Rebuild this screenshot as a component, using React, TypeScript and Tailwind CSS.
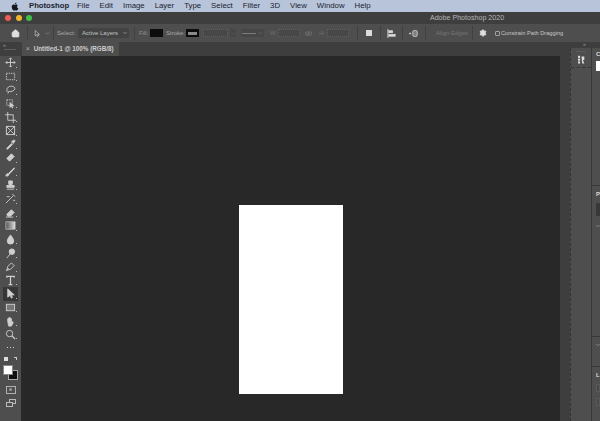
import type { ReactNode } from "react";
import { ChevronDown, Home, Settings } from "lucide-react";

const menus = ["File", "Edit", "Image", "Layer", "Type", "Select", "Filter", "3D", "View", "Window", "Help"];

function Tool({ children, dark }: { children: ReactNode; dark?: boolean }) {
  return (
    <div className={`relative ml-[3px] flex h-[13.6px] w-[15px] items-center justify-center ${dark ? "bg-[#363636]" : ""}`}>
      <svg viewBox="0 0 12 12" className="h-[11px] w-[11px] text-[#cfcfcf]" fill="none" stroke="currentColor" strokeWidth="1">
        {children}
      </svg>
      <span className="absolute bottom-[2px] right-[1px] h-[1px] w-[1px] bg-[#bcbcbc]" />
    </div>
  );
}

function Sep({ className }: { className: string }) {
  return <div className={`h-[14px] w-px shrink-0 bg-[#414141] ${className}`} />;
}

function Label({ className, children }: { className: string; children: ReactNode }) {
  return <span className={`shrink-0 whitespace-nowrap ${className}`}>{children}</span>;
}

export default function App() {
  return (
    <div className="flex h-[421px] w-[600px] flex-col overflow-hidden bg-[#282828] font-['Liberation_Sans',sans-serif]">
      {/* mac menu bar */}
      <div className="flex h-[12px] items-center bg-[#b7c4d9] text-[7.800px] text-[#1c2230]">
        <svg viewBox="0 0 14 16" className="ml-[11px] h-[9px] w-[8px]" fill="#15181f">
          <path d="M10.6 8.5c0-1.8 1.5-2.6 1.5-2.7-.8-1.200-2.100-1.400-2.500-1.400-1-.1-2 .6-2.600.6-.5 0-1.400-.6-2.300-.6C3.500 4.400 2.400 5.100 1.800 6.200.5 8.400 1.500 11.700 2.700 13.500c.6.900 1.300 1.900 2.300 1.800.9 0 1.300-.6 2.400-.6s1.400.6 2.400.6 1.600-.9 2.200-1.800c.7-1 1-2 1-2-.1 0-2.400-.9-2.400-3zM8.800 3.100c.5-.6.900-1.500.8-2.300-.8 0-1.700.5-2.200 1.200-.5.500-.9 1.400-.8 2.200.8 0 1.700-.5 2.200-1.100z" />
        </svg>
        <span className="ml-[10px] w-[39px] whitespace-nowrap text-[7.700px] font-bold">Photoshop</span>
        <div className="ml-[9px] flex gap-[10px]">
          {menus.map((m) => (
            <span key={m}>{m}</span>
          ))}
        </div>
      </div>

      {/* title bar */}
      <div className="relative flex h-[12px] items-center justify-center bg-[#3e3e3e]">
        <div className="absolute left-[5px] flex gap-[4.500px]">
          <span className="h-[6px] w-[6px] rounded-full bg-[#ee5c54]" />
          <span className="h-[6px] w-[6px] rounded-full bg-[#f0b62e]" />
          <span className="h-[6px] w-[6px] rounded-full bg-[#3fc14a]" />
        </div>
        <span className="ml-[334px] text-[7.100px] text-[#b5b5b5]">Adobe Photoshop 2020</span>
      </div>

      {/* options bar */}
      <div className="flex h-[18px] items-center bg-[#4e4e4e] text-[6px] text-[#a8a8a8]">
        <Home className="ml-[11px] h-[9px] w-[9px] shrink-0 text-[#e0e0e0]" fill="currentColor" />
        <Sep className="ml-[7px]" />
        <svg viewBox="0 0 10 12" className="ml-[6px] h-[9px] w-[6px] shrink-0" fill="#444" stroke="#ddd" strokeWidth="1">
          <path d="M2 1v9l2.500-2 1.500 3 1.500-.7L6 7.500h3z" />
        </svg>
        <ChevronDown className="ml-[5px] h-[5px] w-[5px] shrink-0 text-[#bbb]" />
        <Sep className="ml-[3px]" />
        <Label className="ml-[3px] w-[18px]">Select:</Label>
        <div className="ml-[3px] flex h-[10px] w-[51px] shrink-0 items-center justify-between rounded-[1px] bg-[#434343] pl-[4px] pr-[1px] text-[#c4c4c4]">
          <span className="whitespace-nowrap">Active Layers</span>
          <ChevronDown className="h-[6px] w-[6px]" />
        </div>
        <Sep className="ml-[5px]" />
        <Label className="ml-[4px] w-[9px] text-[#949494]">Fill:</Label>
        <div className="ml-[2px] h-[8px] w-[13px] shrink-0 bg-[#0c0c0c]" />
        <Label className="ml-[3px] w-[18px]">Stroke:</Label>
        <div className="ml-[2px] flex h-[8px] w-[13px] shrink-0 items-center justify-center bg-[#0c0c0c]">
          <div className="h-[3px] w-[9px] bg-[#8a8a8a]" />
        </div>
        <div className="ml-[4px] h-[8px] w-[25px] shrink-0 border border-dotted border-[#606060] bg-[#474747]" />
        <div className="ml-[2px] flex h-[8px] w-[6px] shrink-0 items-center justify-center bg-[#474747]">
          <ChevronDown className="h-[5px] w-[5px] text-[#707070]" />
        </div>
        <div className="ml-[5px] flex h-[8px] w-[23px] shrink-0 items-center justify-between bg-[#474747] px-[1px]">
          <div className="h-px w-[14px] bg-[#7c7c7c]" />
          <ChevronDown className="h-[5px] w-[5px] text-[#8a8a8a]" />
        </div>
        <Label className="ml-[6px] w-[5px] text-[#6e6e6e]">W:</Label>
        <div className="ml-[3px] h-[8px] w-[22px] shrink-0 border border-dotted border-[#606060] bg-[#474747]" />
        <svg viewBox="0 0 8 5" className="ml-[5px] h-[5px] w-[7px] shrink-0" fill="none" stroke="#777" strokeWidth="1">
          <rect x="0.500" y="0.500" width="4" height="4" rx="2" />
          <rect x="3.500" y="0.500" width="4" height="4" rx="2" />
        </svg>
        <Label className="ml-[7px] w-[4px] text-[#6e6e6e]">H:</Label>
        <div className="ml-[4px] h-[8px] w-[22px] shrink-0 border border-dotted border-[#606060] bg-[#474747]" />
        <Sep className="ml-[8px]" />
        <div className="ml-[8px] h-[6px] w-[6px] shrink-0 bg-[#dcdcdc]" />
        <Sep className="ml-[8px]" />
        <svg viewBox="0 0 10 10" className="ml-[6px] h-[9px] w-[9px] shrink-0" stroke="#d8d8d8" fill="#d8d8d8">
          <path d="M1 0v10" fill="none" />
          <rect x="2" y="2" width="4" height="2" />
          <rect x="2" y="6" width="7" height="2" />
        </svg>
        <Sep className="ml-[6px]" />
        <svg viewBox="0 0 12 10" className="ml-[6px] h-[9px] w-[9px] shrink-0" stroke="#d8d8d8" fill="#d8d8d8">
          <path d="M0 5h3M1.500 3.500v3" fill="none" />
          <rect x="5" y="1" width="6" height="8" rx="2" fill="#808080" />
        </svg>
        <Sep className="ml-[7px]" />
        <Label className="ml-[10px] w-[30px] text-[#767676]">Align Edges</Label>
        <Sep className="ml-[6px]" />
        <Settings className="ml-[6px] h-[8px] w-[8px] shrink-0 text-[#e0e0e0]" fill="currentColor" />
        <div className="ml-[8px] h-[5px] w-[5px] shrink-0 rounded-[1px] border border-[#a0a0a0]" />
        <Label className="ml-[1px] text-[5.700px] text-[#c8c8c8]">Constrain Path Dragging</Label>
      </div>

      <div className="flex min-h-0 flex-1">
        {/* tools */}
        <div className="flex w-[21px] shrink-0 flex-col bg-[#4e4e4e]">
          <div className="h-[14px] shrink-0 bg-[#3e3e3e] pl-[3px] text-[5px] leading-[6px] text-[#999]">
            »
            <div className="ml-[1px] mt-px h-px w-[12px] bg-[#5c5c5c]" />
          </div>
          <Tool><path d="M6 1v10M1 6h10M4.500 2.500 6 1l1.500 1.500M4.500 9.500 6 11l1.500-1.500M2.500 4.500 1 6l1.500 1.500M9.500 4.500 11 6 9.500 7.500" /></Tool>
          <Tool><rect x="1.500" y="2.500" width="9" height="7" strokeDasharray="1.500 1" /></Tool>
          <Tool><path d="M3 9c-2-2-1-6 3-6.500s6 2 4 4-5 2-6 1.500c-.5 1 0 2-1 2.500" /></Tool>
          <Tool><path d="M2 2h6v6H2z" strokeDasharray="1.500 1" /><path d="M5 4v7l1.800-1.500L8 11.500l1-.5-1-2h2.500z" fill="currentColor" stroke="none" /></Tool>
          <Tool><path d="M3 0v9h9M0 3h9v9" /></Tool>
          <Tool><rect x="1.500" y="1.500" width="9" height="9" /><path d="M1.500 1.500l9 9M10.500 1.500l-9 9" /></Tool>
          <Tool><path d="M2 10l5-5 1 1-5 5H2zM7 3l2 2 2-3-1-1z" fill="currentColor" /></Tool>
          <Tool><path d="M2 7l5-5 3 3-5 5z" fill="currentColor" /></Tool>
          <Tool><path d="M1 11c0-2 1-3 2.500-2.500L10 2l.5.5L4 9.500C4 11 2.500 11 1 11z" fill="currentColor" /></Tool>
          <Tool><path d="M4 1h4v3L7 6h3v2H2V6h3L4 4zM2 10h8" fill="currentColor" /></Tool>
          <Tool><path d="M1 11 9 3M8 1l3 3M2 4h3M9 8h2" /></Tool>
          <Tool><path d="M2 8l5-5 3 3-4 4H3zM1 11h8" fill="currentColor" /></Tool>
          <Tool>
            <defs>
              <linearGradient id="grad">
                <stop offset="0" stopColor="#555" />
                <stop offset="1" stopColor="#ddd" />
              </linearGradient>
            </defs>
            <rect x="1" y="2" width="10" height="8" fill="url(#grad)" strokeWidth="0.700" />
          </Tool>
          <Tool><path d="M6 1c2 3 3.500 4.500 3.500 6.500a3.500 3.500 0 0 1-7 0C2.500 5.500 4 4 6 1z" fill="currentColor" /></Tool>
          <Tool><circle cx="7.500" cy="4" r="3" fill="currentColor" /><path d="M6 6l-4 5" /></Tool>
          <Tool><path d="M2 10l1-4 4-4 3 3-4 4zM1 11l3-3" /></Tool>
          <Tool><path d="M2 3V1.500h8V3M6 1.500v9M4 10.500h4" strokeWidth="1.400" /></Tool>
          <Tool dark><path d="M3 1v9l2.500-2 1.500 3 1-.5L7 7.500h3z" fill="currentColor" /></Tool>
          <Tool><rect x="1.500" y="2.500" width="9" height="7" fill="#777" /></Tool>
          <Tool><path d="M3 6V3h1v3-4h1v4-4h1v4-3h1v4l1-1 1 1-2 4H4z" fill="currentColor" /></Tool>
          <Tool><circle cx="5" cy="5" r="3.500" /><path d="M7.500 7.500 11 11" strokeWidth="1.500" /></Tool>
          <div className="mt-[1px] flex h-[10px] shrink-0 items-center justify-center gap-[1.500px]">
            <span className="h-[1.500px] w-[1.500px] bg-[#d0d0d0]" />
            <span className="h-[1.500px] w-[1.500px] bg-[#d0d0d0]" />
            <span className="h-[1.500px] w-[1.500px] bg-[#d0d0d0]" />
          </div>
          <div className="mt-[3px] flex h-[7px] shrink-0 items-center justify-between px-[4px]">
            <span className="h-[4px] w-[4px] bg-[#ddd]" />
            <span className="h-[3px] w-[3px] border-r border-t border-[#ccc]" />
          </div>
          {/* fg / bg swatches */}
          <div className="relative ml-[3px] mt-[2.500px] h-[15px] w-[15px] shrink-0">
            <div className="absolute bottom-0 right-0 h-[10px] w-[10px] border border-[#aaa] bg-[#111]" />
            <div className="absolute left-0 top-0 h-[10px] w-[10px] border border-[#888] bg-white" />
          </div>
          <div className="mx-auto mt-[6px] flex h-[8px] w-[10px] shrink-0 items-center justify-center border border-[#b0b0b0]">
            <div className="h-[3px] w-[3px] rounded-full bg-[#999]" />
          </div>
          <div className="relative mx-auto mt-[5px] h-[8px] w-[10px] shrink-0">
            <div className="absolute right-0 top-0 h-[5px] w-[7px] border border-[#bbb]" />
            <div className="absolute bottom-0 left-0 h-[5px] w-[7px] border border-[#bbb] bg-[#4e4e4e]" />
          </div>
        </div>

        {/* document */}
        <div className="flex w-[539px] shrink-0 flex-col">
          <div className="flex h-[14px] shrink-0 bg-[#3e3e3e] pl-px">
            <div className="flex w-[97px] items-center whitespace-nowrap bg-[#4e4e4e] text-[6.300px] font-bold text-[#cfcfcf]">
              <span className="ml-[4px] mr-[4px] font-normal text-[#bbb]">×</span>
              Untitled-1 @ 100% (RGB/8)
            </div>
          </div>
          <div className="flex flex-1 justify-center bg-[#282828] pt-[149px]">
            <div className="ml-[1px] h-[189px] w-[104px] bg-white" />
          </div>
        </div>

        {/* scrollbar gutter */}
        <div className="w-[10px] shrink-0 bg-[#3e3e3e]" />

        {/* icon dock */}
        <div className="flex w-[21px] shrink-0 flex-col bg-[#3e3e3e]">
          <div className="h-[6px] shrink-0" />
          <div className="flex flex-1 flex-col border-l border-dashed border-[#333] bg-[#4e4e4e]">
            <div className="flex h-[20px] flex-col items-center border-b border-dashed border-[#333]">
              <div className="mt-[3px] h-px w-[10px] bg-[#5c5c5c]" />
              <svg viewBox="0 0 10 12" className="mt-[3px] h-[10px] w-[7px]" fill="#ddd">
                <rect x="0" y="0" width="3" height="3" />
                <rect x="0" y="4" width="3" height="3" />
                <rect x="0" y="8" width="3" height="3" />
                <path d="M5 1h4v5H7l2 5H6z" />
              </svg>
            </div>
          </div>
        </div>

        {/* panels */}
        <div className="relative flex w-[9px] shrink-0 flex-col bg-[#3e3e3e] text-[6px] font-bold text-[#ddd]">
          <span className="absolute left-[-8px] top-0 text-[5px] font-normal leading-[5px] text-[#999]">»</span>
          <div className="h-[6px] shrink-0" />
          <div className="flex h-[138px] shrink-0 flex-col border-b border-l border-[#383838] bg-[#4e4e4e] pl-[4px]">
            <span className="mt-[3px] leading-[7px]">C</span>
            <div className="mt-[3px] h-[10px] w-[4px] bg-white" />
          </div>
          <div className="flex h-[151px] shrink-0 flex-col border-b border-l border-[#383838] bg-[#4e4e4e] pl-[4px]">
            <span className="mt-[5px] leading-[7px]">P</span>
            <div className="mt-[5px] h-[13px] w-[4px] bg-[#383838]" />
            <ChevronDown className="ml-[-1px] mt-[7px] h-[6px] w-[6px] text-[#bbb]" />
          </div>
          <div className="flex h-[30px] shrink-0 flex-col border-b border-l border-[#383838] bg-[#4e4e4e] pl-[4px]">
            <ChevronDown className="ml-[-1px] mt-[5px] h-[6px] w-[6px] text-[#bbb]" />
          </div>
          <div className="flex flex-1 flex-col border-l border-[#383838] bg-[#4e4e4e] pl-[4px]">
            <span className="mt-[5px] leading-[7px]">L</span>
            <div className="mt-[5px] h-[8px] w-[4px] border border-[#5a5a5a] bg-[#474747]" />
            <div className="mt-[6px] h-[8px] w-[4px] border border-[#5a5a5a] bg-[#474747]" />
          </div>
        </div>
      </div>
    </div>
  );
}
